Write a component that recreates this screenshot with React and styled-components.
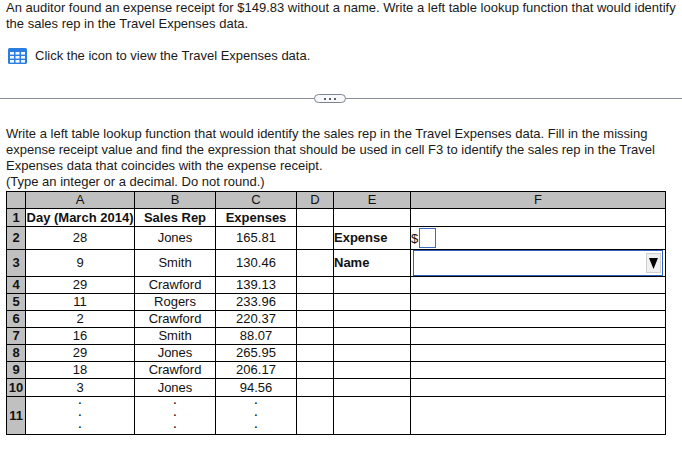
import React from 'react';
import styled, { createGlobalStyle } from 'styled-components';

const Global = createGlobalStyle`
  html, body { margin: 0; padding: 0; background: #fff; }
  body { font-family: "Liberation Sans", Arial, sans-serif; color: #1a1a1a; }
`;
const Page = styled.div`
  width: 682px; height: 450px; overflow: hidden; box-sizing: border-box; padding-left: 6px;
`;
const Para = styled.p`
  margin: 0; font-size: 13px; line-height: 15.5px; width: 676px; white-space: pre-line;
`;
const IconRow = styled.div`
  display: flex; align-items: center; gap: 8px; margin-top: 15px; margin-left: 2px;
  font-size: 13px; line-height: 15px; height: 19px;
`;
const Divider = styled.div`
  position: relative; margin: 33px 0 0 -6px; width: 682px; height: 1px; background: #8a8f9c;
`;
const Pill = styled.div`
  position: absolute; left: 314px; top: -4px; width: 32px; height: 9px; box-sizing: border-box;
  border: 1px solid #7d8494; border-radius: 5px; background: #f6f8fa;
  display: flex; align-items: center; justify-content: center; gap: 3px;
`;
const Dot = styled.span`
  width: 2px; height: 2px; background: #5a6070;
`;
const Question = styled(Para)`
  margin-top: 27px; line-height: 16px;
`;
const Sheet = styled.table`
  border-collapse: collapse; table-layout: fixed; width: 659px; margin-top: 1px;
  font-size: 13px; color: #111;
  th, td { border: 1px solid #000; padding: 0; text-align: center; overflow: visible; white-space: nowrap; }
`;
const Col = styled.col`
  width: ${p => p.$w}px;
`;
const Row = styled.tr`
  height: ${p => p.$h}px;
`;
const Head = styled.th`
  background: #c0c0c0; font-weight: 400; font-size: 13px; line-height: 14px;
`;
const RowHead = styled.th`
  background: #c0c0c0; font-weight: 700; font-size: 13px; line-height: 14px;
`;
const Bold = styled.td`
  font-weight: 700; line-height: 14px;
`;
const Label = styled.td`
  && { text-align: left; font-weight: 700; padding-left: 0; line-height: 14px; }
`;
const Cell = styled.td`
  line-height: 14px;
`;
const DollarCell = styled.td`
  && { text-align: left; }
`;
const DollarWrap = styled.div`
  display: flex; align-items: center; height: 21px;
`;
const AnswerBox = styled.div`
  width: 17px; height: 20px; box-sizing: border-box; border: 1px solid #3a6cc4; margin-left: 1px;
`;
const Select = styled.div`
  box-sizing: border-box; height: 26px; margin: 0 2px; border: 1px solid #2f62c0;
  display: flex; align-items: center; justify-content: flex-end; padding-right: 1px;
`;
const Arrow = styled.div`
  width: 15px; height: 20px; box-sizing: border-box; background: #f0f0f0;
  border: 1px solid #cfcfcf; display: flex; align-items: center; justify-content: center;
`;
const Dots = styled.div`
  display: flex; flex-direction: column; align-items: center;
  font-size: 10px; line-height: 12px; font-weight: 700; margin-top: -6px;
`;

const DotStack = () => (
  <Dots><span>.</span><span>.</span><span>.</span></Dots>
);

const rows = [
  [4, 17, '29', 'Crawford', '139.13'],
  [5, 17, '11', 'Rogers', '233.96'],
  [6, 17, '2', 'Crawford', '220.37'],
  [7, 17, '16', 'Smith', '88.07'],
  [8, 17, '29', 'Jones', '265.95'],
  [9, 17, '18', 'Crawford', '206.17'],
  [10, 18, '3', 'Jones', '94.56'],
];

const GridIcon = () => (
  <svg width="19" height="16" viewBox="0 0 19 16">
    <rect x="0" y="0" width="19" height="16" rx="1.5" fill="#2b7de0" />
    {[2, 7.5, 13].map(x => [4, 8, 12].map(y => (
      <rect key={`${x}-${y}`} x={x} y={y} width="4" height="2.6" fill="#f2f7fd" />
    )))}
  </svg>
);

export default function App() {
  return (
    <Page>
      <Global />
      <Para>{`An auditor found an expense receipt for $149.83 without a name. Write a left table lookup function that would identify
the sales rep in the Travel Expenses data.`}</Para>
      <IconRow><GridIcon />Click the icon to view the Travel Expenses data.</IconRow>
      <Divider><Pill><Dot /><Dot /><Dot /></Pill></Divider>
      <Question>{`Write a left table lookup function that would identify the sales rep in the Travel Expenses data. Fill in the missing
expense receipt value and find the expression that should be used in cell F3 to identify the sales rep in the Travel
Expenses data that coincides with the expense receipt.
(Type an integer or a decimal. Do not round.)`}</Question>
      <Sheet>
        <colgroup>
          <Col $w={19} /><Col $w={109} /><Col $w={81} /><Col $w={81} /><Col $w={37} /><Col $w={77} /><Col $w={255} />
        </colgroup>
        <tbody>
          <Row $h={17}>
            <Head />
            <Head>A</Head><Head>B</Head><Head>C</Head><Head>D</Head><Head>E</Head><Head>F</Head>
          </Row>
          <Row $h={18}>
            <RowHead>1</RowHead>
            <Bold>Day (March 2014)</Bold><Bold>Sales Rep</Bold><Bold>Expenses</Bold><Cell /><Cell /><Cell />
          </Row>
          <Row $h={23}>
            <RowHead>2</RowHead>
            <Cell>28</Cell><Cell>Jones</Cell><Cell>165.81</Cell><Cell />
            <Label>Expense</Label>
            <DollarCell><DollarWrap>$<AnswerBox /></DollarWrap></DollarCell>
          </Row>
          <Row $h={27}>
            <RowHead>3</RowHead>
            <Cell>9</Cell><Cell>Smith</Cell><Cell>130.46</Cell><Cell />
            <Label>Name</Label>
            <Cell>
              <Select>
                <Arrow>
                  <svg width="9" height="11" viewBox="0 0 9 11"><path d="M0 0h9L4.5 11z" fill="#000" /></svg>
                </Arrow>
              </Select>
            </Cell>
          </Row>
          {rows.map(([n, h, a, b, c]) => (
            <Row $h={h} key={n}>
              <RowHead>{n}</RowHead>
              <Cell>{a}</Cell><Cell>{b}</Cell><Cell>{c}</Cell><Cell /><Cell /><Cell />
            </Row>
          ))}
          <Row $h={38}>
            <RowHead>11</RowHead>
            <Cell><DotStack /></Cell><Cell><DotStack /></Cell><Cell><DotStack /></Cell><Cell /><Cell /><Cell />
          </Row>
        </tbody>
      </Sheet>
    </Page>
  );
}
